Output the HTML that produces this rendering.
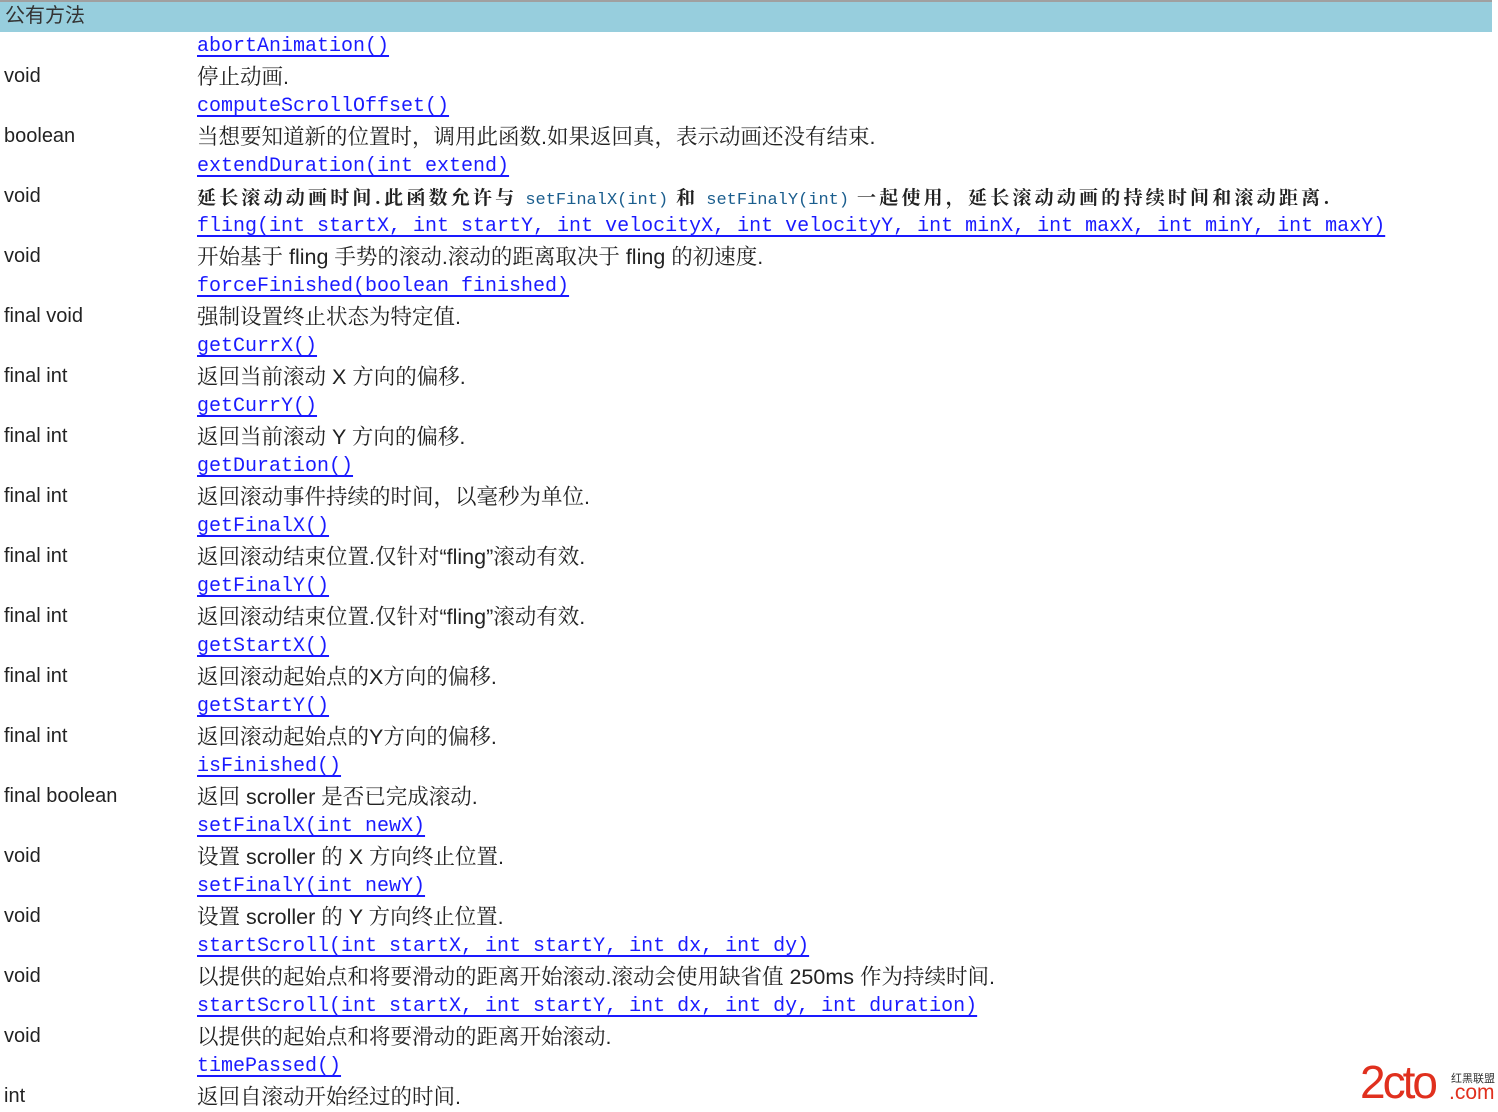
<!DOCTYPE html>
<html><head><meta charset="utf-8"><style>
body{margin:0;background:#fff;width:1498px;height:1112px;overflow:hidden;position:relative}
.hd{position:absolute;left:0;top:0;width:1492px;height:32px;border-top:2px solid #a0a0a0;box-sizing:border-box;background:#97cedd;font:20px "Liberation Sans","Noto Sans CJK SC",sans-serif;color:#333;padding-left:5px;line-height:28px}
.r{position:absolute;left:0;height:30px;line-height:30px;white-space:nowrap}
.l{position:absolute;left:197px;top:2px;font:20px "Liberation Mono","Noto Serif CJK SC",monospace;color:#1a1aff;text-decoration:underline;text-underline-offset:4px;line-height:30px}
.t{position:absolute;left:4px;top:1px;font:20px "Liberation Sans",sans-serif;color:#222;line-height:30px}
.d{position:absolute;left:197px;top:2px;font:21.5px "Liberation Sans","Noto Serif CJK SC",serif;color:#222;line-height:30px}
.b{font-weight:bold;font-size:19px;font-family:"Noto Serif CJK SC",serif;letter-spacing:3.2px}
.m{font:17px "Liberation Mono",monospace;color:#1b5e8e;font-weight:normal;letter-spacing:0}
</style></head><body>
<div class="hd">公有方法</div>
<div class="r" style="top:30px"><span class="l">abortAnimation()</span></div>
<div class="r" style="top:60px"><span class="t">void</span><span class="d">停止动画.</span></div>
<div class="r" style="top:90px"><span class="l">computeScrollOffset()</span></div>
<div class="r" style="top:120px"><span class="t">boolean</span><span class="d">当想要知道新的位置时，调用此函数.如果返回真，表示动画还没有结束.</span></div>
<div class="r" style="top:150px"><span class="l">extendDuration(int extend)</span></div>
<div class="r" style="top:180px"><span class="t">void</span><span class="d b">延长滚动动画时间.此函数允许与 <span class="m">setFinalX(int)</span> 和 <span class="m">setFinalY(int)</span> 一起使用，延长滚动动画的持续时间和滚动距离.</span></div>
<div class="r" style="top:210px"><span class="l">fling(int startX, int startY, int velocityX, int velocityY, int minX, int maxX, int minY, int maxY)</span></div>
<div class="r" style="top:240px"><span class="t">void</span><span class="d">开始基于 fling 手势的滚动.滚动的距离取决于 fling 的初速度.</span></div>
<div class="r" style="top:270px"><span class="l">forceFinished(boolean finished)</span></div>
<div class="r" style="top:300px"><span class="t">final void</span><span class="d">强制设置终止状态为特定值.</span></div>
<div class="r" style="top:330px"><span class="l">getCurrX()</span></div>
<div class="r" style="top:360px"><span class="t">final int</span><span class="d">返回当前滚动 X 方向的偏移.</span></div>
<div class="r" style="top:390px"><span class="l">getCurrY()</span></div>
<div class="r" style="top:420px"><span class="t">final int</span><span class="d">返回当前滚动 Y 方向的偏移.</span></div>
<div class="r" style="top:450px"><span class="l">getDuration()</span></div>
<div class="r" style="top:480px"><span class="t">final int</span><span class="d">返回滚动事件持续的时间，以毫秒为单位.</span></div>
<div class="r" style="top:510px"><span class="l">getFinalX()</span></div>
<div class="r" style="top:540px"><span class="t">final int</span><span class="d">返回滚动结束位置.仅针对“fling”滚动有效.</span></div>
<div class="r" style="top:570px"><span class="l">getFinalY()</span></div>
<div class="r" style="top:600px"><span class="t">final int</span><span class="d">返回滚动结束位置.仅针对“fling”滚动有效.</span></div>
<div class="r" style="top:630px"><span class="l">getStartX()</span></div>
<div class="r" style="top:660px"><span class="t">final int</span><span class="d">返回滚动起始点的X方向的偏移.</span></div>
<div class="r" style="top:690px"><span class="l">getStartY()</span></div>
<div class="r" style="top:720px"><span class="t">final int</span><span class="d">返回滚动起始点的Y方向的偏移.</span></div>
<div class="r" style="top:750px"><span class="l">isFinished()</span></div>
<div class="r" style="top:780px"><span class="t">final boolean</span><span class="d">返回 scroller 是否已完成滚动.</span></div>
<div class="r" style="top:810px"><span class="l">setFinalX(int newX)</span></div>
<div class="r" style="top:840px"><span class="t">void</span><span class="d">设置 scroller 的 X 方向终止位置.</span></div>
<div class="r" style="top:870px"><span class="l">setFinalY(int newY)</span></div>
<div class="r" style="top:900px"><span class="t">void</span><span class="d">设置 scroller 的 Y 方向终止位置.</span></div>
<div class="r" style="top:930px"><span class="l">startScroll(int startX, int startY, int dx, int dy)</span></div>
<div class="r" style="top:960px"><span class="t">void</span><span class="d">以提供的起始点和将要滑动的距离开始滚动.滚动会使用缺省值 250ms 作为持续时间.</span></div>
<div class="r" style="top:990px"><span class="l">startScroll(int startX, int startY, int dx, int dy, int duration)</span></div>
<div class="r" style="top:1020px"><span class="t">void</span><span class="d">以提供的起始点和将要滑动的距离开始滚动.</span></div>
<div class="r" style="top:1050px"><span class="l">timePassed()</span></div>
<div class="r" style="top:1080px"><span class="t">int</span><span class="d">返回自滚动开始经过的时间.</span></div>
<div style="position:absolute;left:1360px;top:1062px;font:46px 'Liberation Sans',sans-serif;color:#e0301e;letter-spacing:-3px;line-height:40px">2cto</div>
<div style="position:absolute;left:1451px;top:1072px;font:11px 'Noto Sans CJK SC',sans-serif;color:#333;line-height:12px">红黑联盟</div>
<div style="position:absolute;left:1449px;top:1082px;font:21px 'Liberation Sans',sans-serif;color:#e0301e;line-height:22px">.com</div>
</body></html>
